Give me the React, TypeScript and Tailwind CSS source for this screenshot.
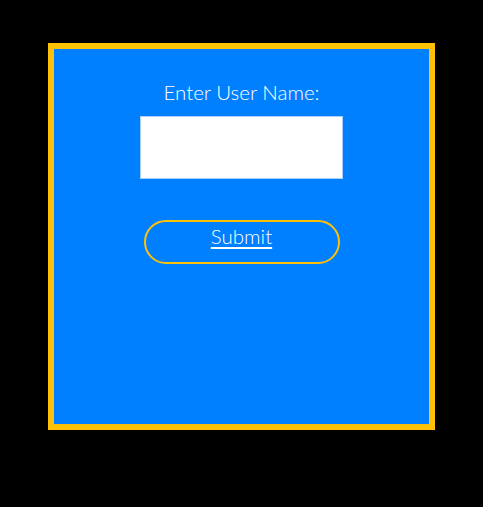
export default function App() {
  return (
    <div className="min-h-[507px] w-full bg-black pt-[43px] pb-[77px]" style={{ fontFamily: "Lato, 'Noto Sans', sans-serif" }}>
      <div className="mx-auto flex h-[387px] w-[387px] flex-col items-center border-[6px] border-[#ffc107] bg-[#0080ff] pt-[28px]">
        <label className="text-[20.5px] font-light leading-[30px] text-white">Enter User Name:</label>
        <input
          type="text"
          className="mt-[9px] h-[63px] w-[203px] border border-[#a8d0ff] bg-white outline-none"
        />
        <button className="mt-[41px] h-[44px] w-[196px] rounded-full border-2 border-[#ffc107] pb-[12px] text-[20.5px] font-light leading-[24px] text-white underline underline-offset-[3px]">
          Submit
        </button>
      </div>
    </div>
  );
}
